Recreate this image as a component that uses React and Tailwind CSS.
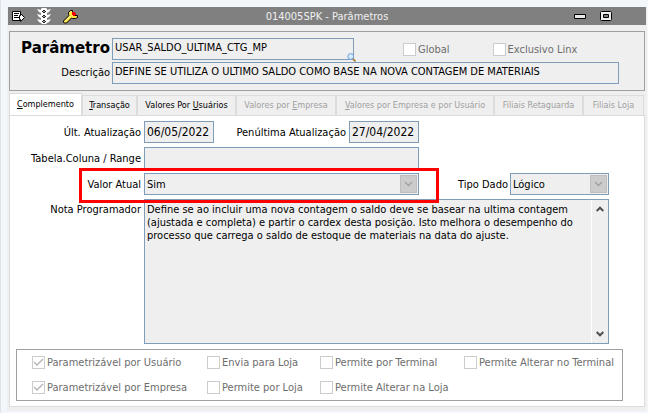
import { useState } from 'react'

const tabs = [
  { id: 'complemento', pre: '', hot: 'C', post: 'omplemento', width: 'w-[73px]' },
  { id: 'transacao', pre: '', hot: 'T', post: 'ransação', width: 'w-[55px]' },
  { id: 'usuarios', pre: 'Valores Por ', hot: 'U', post: 'suários', width: 'w-[99px]' },
  { id: 'empresa', pre: 'Valores por ', hot: 'E', post: 'mpresa', width: 'w-[100px]', disabled: true },
  { id: 'empresa-usuario', pre: '', hot: 'V', post: 'alores por Empresa e por Usuário', width: 'w-[158px]', disabled: true },
  { id: 'retaguarda', pre: 'Filiais Retaguarda', hot: '', post: '', width: 'w-[89px]', disabled: true },
  { id: 'loja', pre: 'Filiais Loja', hot: '', post: '', width: 'w-[61px]', disabled: true },
]

const flags = [
  { label: 'Parametrizável por Usuário', checked: true },
  { label: 'Envia para Loja' },
  { label: 'Permite por Terminal' },
  { label: 'Permite Alterar no Terminal' },
  { label: 'Parametrizável por Empresa', checked: true },
  { label: 'Permite por Loja' },
  { label: 'Permite Alterar na Loja' },
]

const field = 'h-[22px] border border-[#7f9db9] bg-[#efefef] px-0.5 text-black outline-none'

function Check({ label, checked = false }) {
  return (
    <label className="flex items-center gap-0.5 whitespace-nowrap text-[#6d6d6d]">
      <span className="grid shrink-0">
        <input
          type="checkbox"
          disabled
          defaultChecked={checked}
          className="peer col-start-1 row-start-1 size-[13px] appearance-none border border-[#cccccc] bg-white"
        />
        <svg viewBox="0 0 13 13" className="pointer-events-none invisible col-start-1 row-start-1 size-[13px] peer-checked:visible">
          <path d="M2 6 L5 9 L11 3" fill="none" stroke="#b4b4b4" strokeWidth="1.4" />
        </svg>
      </span>
      {label}
    </label>
  )
}

function Combo({ id, value, className }) {
  return (
    <div className={`grid ${className}`}>
      <select id={id} disabled defaultValue={value} className={`${field} col-start-1 row-start-1 w-full appearance-none opacity-100`}>
        <option>{value}</option>
      </select>
      <span className="pointer-events-none col-start-1 row-start-1 m-0.5 flex w-[17px] items-center justify-center self-stretch justify-self-end border border-[#bfbfbf] bg-[#cccccc]">
        <svg viewBox="0 0 9 6" className="h-1.5 w-[9px]">
          <path d="M1 1 L4.5 4.5 L8 1" fill="none" stroke="#a0a0a0" strokeWidth="1.3" />
        </svg>
      </span>
    </div>
  )
}

function TitleBar() {
  return (
    <header className="grid h-[18px] grid-cols-3 items-center bg-[#808080] text-[#f0f0f0]">
      <div className="flex items-center gap-3 pl-[3px]">
        <button aria-label="Relatório">
          <svg viewBox="0 0 14 13" className="h-[13px] w-3.5">
            <path d="M1.5 1.5h8v9h-8z" fill="#fff" stroke="#000" strokeLinejoin="round" />
            <path d="M3 3.5h5M3 5.5h4M3 7.5h5" stroke="#000" />
            <path d="M8.5 5.5h1v-2l4 4-4 4v-2h-1z" fill="#fff" stroke="#000" />
          </svg>
        </button>
        <button aria-label="Semáforo">
          <svg viewBox="0 0 14 16" className="h-4 w-3.5">
            <path d="M4 1l1-1h4l1 1v14l-1 1H5l-1-1z" fill="#fff" />
            <path d="M0 1l4 1v3L2 4zM14 1l-4 1v3l2-1zM0 6l4 1v3L2 9zM14 6l-4 1v3l2-1zM0 11l4 1v3l-2-1zM14 11l-4 1v3l2-1z" fill="#fff" />
            <path d="M6 2h2v1h1v1H8v1H6V4H5V3h1zM6 7h2v1h1v1H8v1H6V9H5V8h1zM6 12h2v1h1v1H8v1H6v-1H5v-1h1z" fill="#222" />
            <path d="M6 3h2v1H6zM6 8h2v1H6zM6 13h2v1H6z" fill="#999" />
          </svg>
        </button>
        <button aria-label="Ferramentas">
          <svg viewBox="0 0 15 15" className="size-[15px]">
            <path
              d="M7.5 1.5h2v3l2 2h3v2l-2 1h-3l-1-.5-5 5h-2l-1-1v-1l5.5-5.5-.5-1v-2z"
              fill="#ffe640"
              stroke="#000"
            />
            <path d="M2 12.5L7.5 7" stroke="#fff8b0" />
            <path d="M9 3h3v1h1v2h-1v1h-2V6H9z" fill="#f00000" />
          </svg>
        </button>
      </div>
      <h1 className="text-center text-[11px]">014005SPK - Parâmetros</h1>
      <div className="flex items-center justify-end gap-3.5 pr-[34px]">
        <button aria-label="Minimizar">
          <svg viewBox="0 0 12 5" className="h-[5px] w-3">
            <path d="M.5.5h11v4H.5z" fill="#e8e8e8" stroke="#000" />
          </svg>
        </button>
        <button aria-label="Restaurar">
          <svg viewBox="0 0 12 10" className="h-2.5 w-3">
            <rect x=".5" y=".5" width="11" height="9" rx="1" fill="#f0f0f0" stroke="#000" />
            <path d="M3.5 3.5h5v3h-5z" fill="#808080" stroke="#000" />
          </svg>
        </button>
      </div>
    </header>
  )
}

export default function App() {
  const [active, setActive] = useState('complemento')

  return (
    <div className="min-h-screen border-l border-[#dfe2e6] bg-[#f3f6fb] pt-[7px] pr-px pb-0.5 pl-1.5 font-['DejaVu_Sans_Condensed','Noto_Sans',sans-serif] text-[11px] leading-[13px] text-black">
      <main className="bg-[#efefef] px-px pb-1">
        <TitleBar />

        {/* Parameter identification */}
        <section className="mx-px mt-1.5 grid grid-cols-[100px_1fr] gap-x-0.5 gap-y-0.5 border border-[#a0a0a0] py-1.5 pr-[25px]">
          <label htmlFor="parametro" className="self-center justify-self-end pb-0.5 font-['DejaVu_Sans',sans-serif] text-[15px] font-bold">
            Parâmetro
          </label>
          <div className="flex items-center">
            <div className="relative w-[242px]">
              <input id="parametro" readOnly defaultValue="USAR_SALDO_ULTIMA_CTG_MP" className={`${field} w-full pb-[3px]`} />
              <svg viewBox="0 0 9 9" className="absolute -right-0.5 -bottom-0.5 size-[9px]">
                <path d="M5.5 5.5L8.5 8.5" stroke="#b08040" strokeWidth="1.8" />
                <circle cx="3.7" cy="3.5" r="2.9" fill="#d4ebff" stroke="#6f9fdc" />
              </svg>
            </div>
            <div className="ml-[49px] flex gap-[43px]">
              <Check label="Global" />
              <Check label="Exclusivo Linx" />
            </div>
          </div>
          <label htmlFor="descricao" className="self-center pb-0.5 text-right">Descrição</label>
          <input
            id="descricao"
            readOnly
            defaultValue="DEFINE SE UTILIZA O ULTIMO SALDO COMO BASE NA NOVA CONTAGEM DE MATERIAIS"
            className={`${field} pb-[3px]`}
          />
        </section>

        <nav className="mx-px mt-0.5 flex items-end text-[9px]">
          {tabs.map((tab) => (
            <button
              key={tab.id}
              disabled={tab.disabled}
              onClick={() => setActive(tab.id)}
              className={`
                shrink-0 whitespace-nowrap border border-b-0 border-[#dcdcdc] ${tab.width}
                ${active === tab.id ? 'h-[22px] bg-white' : 'h-5 bg-[#efefef]'}
                ${tab.disabled ? 'text-[#a0a0a0]' : 'text-black'}
              `}
            >
              {tab.pre}<u>{tab.hot}</u>{tab.post}
            </button>
          ))}
        </nav>

        {/* Tab page */}
        <section className="mx-px border border-[#dcdcdc] bg-white px-1.5 pt-[5px] pb-[5px]">
          <div className="grid grid-cols-[125px_1fr] gap-x-[3px] gap-y-1 pr-[29px]">
            <label htmlFor="ultima" className="self-center text-right">Últ. Atualização</label>
            <div className="flex items-center">
              <input id="ultima" readOnly defaultValue="06/05/2022" className={`${field} w-[70px] text-[12px]`} />
              <div className="flex w-[205px] items-center justify-end gap-[3px]">
                <label htmlFor="penultima">Penúltima Atualização</label>
                <input id="penultima" readOnly defaultValue="27/04/2022" className={`${field} w-[70px] text-[12px]`} />
              </div>
            </div>

            <label htmlFor="range" className="self-center text-right">Tabela.Coluna / Range</label>
            <input id="range" readOnly className={`${field} w-[275px]`} />

            <label htmlFor="valor" className="self-center text-right">Valor Atual</label>
            <div className="relative flex items-center">
              <Combo id="valor" value="Sim" className="w-[275px]" />
              <div className="ml-auto flex items-center gap-0.5">
                <label htmlFor="tipo">Tipo Dado</label>
                <Combo id="tipo" value="Lógico" className="w-[99px]" />
              </div>
              {/* Highlight around the current value */}
              <div className="pointer-events-none absolute -top-[5px] -left-[65px] z-10 h-[35px] w-[360px] border-3 border-[#ff0000]" />
            </div>

            <label htmlFor="nota" className="pt-1 text-right">Nota Programador</label>
            <div className="flex h-[145px] border border-[#7f9db9] bg-[#efefef]">
              <textarea
                id="nota"
                readOnly
                className="flex-1 resize-none overflow-hidden px-0.5 pt-[3px] outline-none"
                defaultValue={'Define se ao incluir uma nova contagem o saldo deve se basear na ultima contagem\n(ajustada e completa) e partir o cardex desta posição. Isto melhora o desempenho do\nprocesso que carrega o saldo de estoque de materiais na data do ajuste.'}
              />
              <div className="flex w-[17px] flex-col items-center justify-between border-l border-white py-1.5">
                <svg viewBox="0 0 8 6" className="h-1.5 w-2">
                  <path d="M.7 5L4 1.7L7.3 5" fill="none" stroke="#505050" strokeWidth="2" />
                </svg>
                <svg viewBox="0 0 8 6" className="h-1.5 w-2">
                  <path d="M.7 1L4 4.3L7.3 1" fill="none" stroke="#505050" strokeWidth="2" />
                </svg>
              </div>
            </div>
          </div>

          <div className="mt-[5px] mr-[15px] grid grid-cols-[175px_113px_144px_1fr] gap-y-3 border border-[#a0a0a0] py-1.5 pl-[15px]">
            {flags.map((flag) => (
              <Check key={flag.label} {...flag} />
            ))}
          </div>
        </section>
      </main>
    </div>
  )
}
